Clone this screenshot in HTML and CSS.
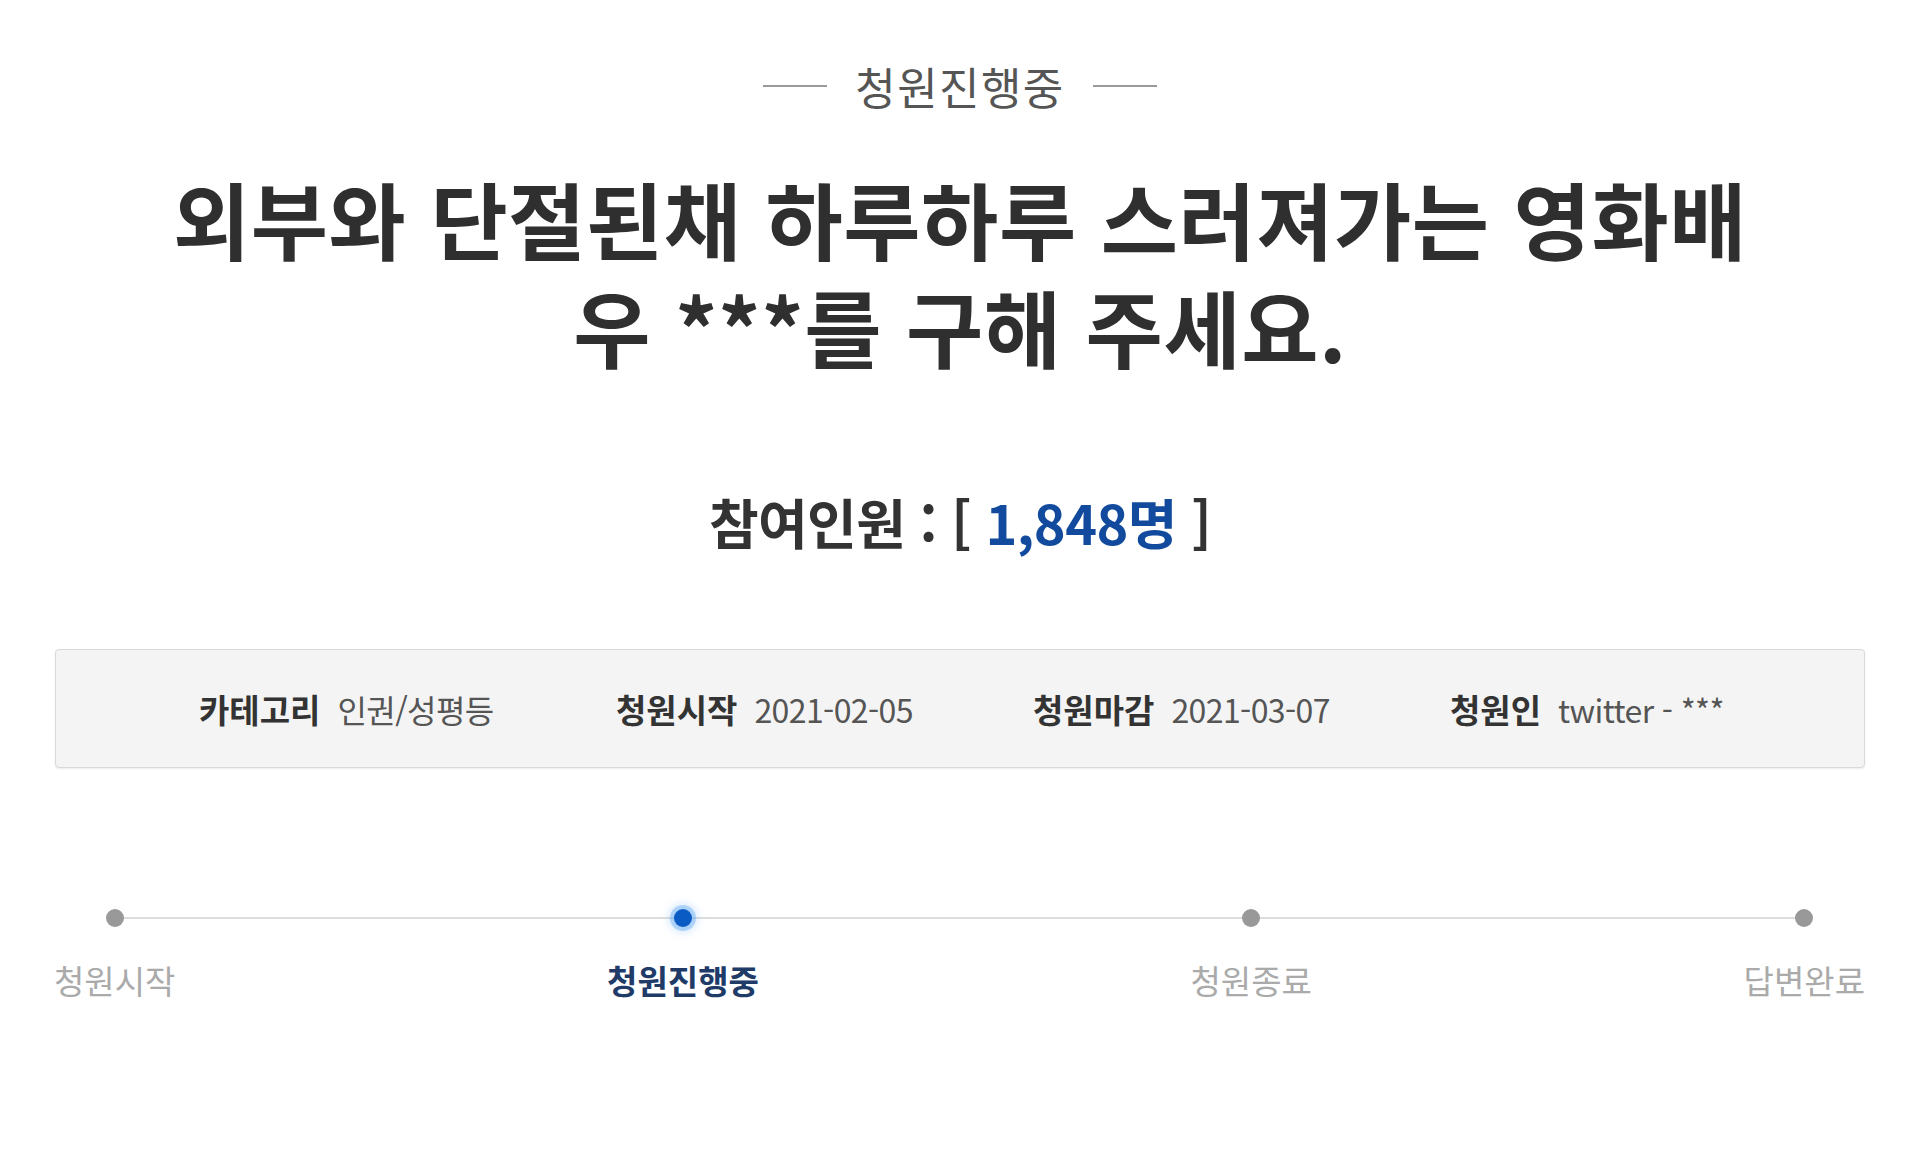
FILE: index.html
```html
<!DOCTYPE html>
<html lang="ko">
<head>
<meta charset="utf-8">
<title>청원진행중</title>
<link rel="stylesheet" href="styles.css">
</head>
<body>
<div class="page">
  <div class="status"><span class="status-line"></span><span class="status-text">청원진행중</span><span class="status-line"></span></div>
  <h1 class="title">외부와 단절된채 하루하루 스러져가는 영화배우 ***를 구해 주세요.</h1>
  <p class="count">참여인원 : [ <span class="count-num">1,848명</span> ]</p>
  <ul class="info">
    <li class="info-item"><strong class="info-label">카테고리</strong><span class="info-value">인권/성평등</span></li>
    <li class="info-item"><strong class="info-label">청원시작</strong><span class="info-value">2021-02-05</span></li>
    <li class="info-item"><strong class="info-label">청원마감</strong><span class="info-value">2021-03-07</span></li>
    <li class="info-item"><strong class="info-label">청원인</strong><span class="info-value">twitter - ***</span></li>
  </ul>
  <ol class="steps">
    <li class="step"><span class="dot"></span><span class="step-label">청원시작</span></li>
    <li class="step step-active"><span class="dot"></span><span class="step-label">청원진행중</span></li>
    <li class="step"><span class="dot"></span><span class="step-label">청원종료</span></li>
    <li class="step"><span class="dot"></span><span class="step-label">답변완료</span></li>
  </ol>
</div>
</body>
</html>
```
FILE: styles.css
```css
html, body {
  margin: 0;
  padding: 0;
  background: #ffffff;
}
body {
  font-family: "Noto Sans CJK KR", "Noto Sans", sans-serif;
  color: #333333;
}
.page {
  width: 1920px;
  padding-top: 61px;
  box-sizing: border-box;
}
.status {
  display: flex;
  justify-content: center;
  align-items: center;
  gap: 28px;
  height: 50px;
}
.status-line {
  width: 64px;
  height: 2px;
  background: #9a9a9a;
}
.status-text {
  font-size: 44px;
  letter-spacing: 1.4px;
  line-height: 50px;
  color: #555555;
}
.title {
  width: 1600px;
  margin: 53px auto 0;
  font-size: 84px;
  letter-spacing: 0.5px;
  line-height: 108px;
  font-weight: 700;
  text-align: center;
  color: #2f2f2f;
}
.count {
  margin: 110px 0 0;
  text-align: center;
  font-size: 54px;
  letter-spacing: -0.6px;
  line-height: 64px;
  font-weight: 700;
  color: #333333;
}
.count-num {
  color: #124b9e;
}
.info {
  list-style: none;
  margin: 95px 55px 0 55px;
  padding: 0 0 0 143px;
  height: 119px;
  box-sizing: border-box;
  display: grid;
  grid-template-columns: repeat(4, 417px);
  align-items: center;
  background: #f4f4f4;
  border: 1px solid #d9d9d9;
  border-radius: 4px;
  box-shadow: 0 1px 2px rgba(0, 0, 0, 0.08);
}
.info-item {
  display: flex;
  align-items: center;
  gap: 17px;
  line-height: 40px;
  white-space: nowrap;
}
.info-label {
  font-size: 33px;
  letter-spacing: 0;
  font-weight: 700;
  color: #333333;
}
.info-value {
  font-size: 32px;
  letter-spacing: -0.6px;
  color: #555555;
}
.steps {
  list-style: none;
  margin: 141px 55px 0 54px;
  padding: 0;
  display: flex;
  justify-content: space-between;
  position: relative;
}
.steps::before {
  content: "";
  position: absolute;
  top: 8px;
  left: 58px;
  right: 60px;
  height: 2px;
  background: #dddddd;
}
.step {
  display: flex;
  flex-direction: column;
  align-items: center;
  position: relative;
}
.dot {
  width: 18px;
  height: 18px;
  border-radius: 50%;
  background: #999999;
}
.step-active .dot {
  background: #0a5cc4;
  box-shadow: 0 0 0 4px rgba(80, 160, 240, 0.35), 0 0 8px 5px rgba(120, 180, 245, 0.35);
}
.step-label {
  margin-top: 33px;
  font-size: 33px;
  letter-spacing: 0;
  line-height: 40px;
  color: #aaaaaa;
}
.step-active .step-label {
  font-weight: 700;
  color: #213b68;
}
```
